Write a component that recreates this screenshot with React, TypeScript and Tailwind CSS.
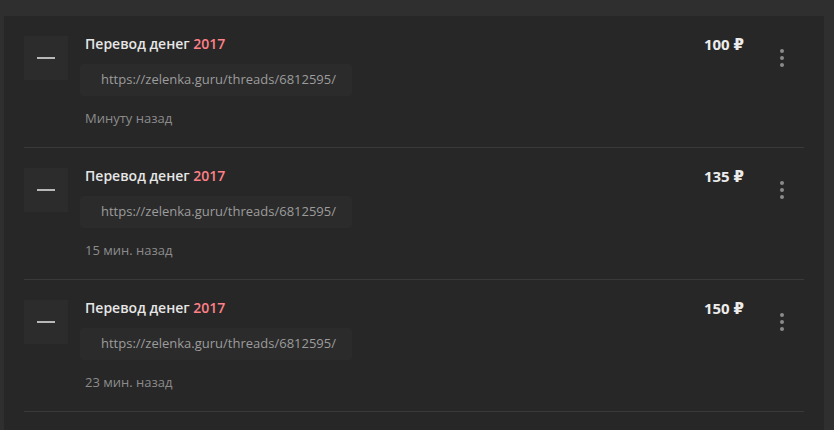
import React from 'react';

interface Transfer {
  title: string;
  year: string;
  url: string;
  time: string;
  amount: number;
}

const transfers: Transfer[] = [
  { title: 'Перевод денег', year: '2017', url: 'https://zelenka.guru/threads/6812595/', time: 'Минуту назад', amount: 100 },
  { title: 'Перевод денег', year: '2017', url: 'https://zelenka.guru/threads/6812595/', time: '15 мин. назад', amount: 135 },
  { title: 'Перевод денег', year: '2017', url: 'https://zelenka.guru/threads/6812595/', time: '23 мин. назад', amount: 150 },
];

const TransferRow: React.FC<{ item: Transfer }> = ({ item }) => (
  <div className="flex items-start pt-5 pb-[21px] border-b border-[#3a3a3a]">
    <div className="w-11 h-11 flex-shrink-0 bg-[#2c2c2c] flex items-center justify-center">
      <span className="block w-[18px] h-[2px] bg-[#b8b8b8]" />
    </div>
    <div className="flex-1 ml-[17px]">
      <div className="text-[14px] leading-4 font-semibold text-[#e6e6e6]">
        {item.title} <span className="text-[#ff8087]">{item.year}</span>
      </div>
      <div className="mt-3 -ml-[5px] inline-flex items-center h-8 pl-[21px] pr-4 bg-[#2b2b2b] rounded-sm text-[13px] text-[#9c9c9c]">
        {item.url}
      </div>
      <div className="mt-[14px] text-[13px] leading-4 text-[#8c8c8c]">{item.time}</div>
    </div>
    <div className="-mt-px text-[15px] leading-[18px] font-bold text-[#ececec] whitespace-nowrap">
      {item.amount} ₽
    </div>
    <button className="ml-[26px] mr-[10px] mt-[13px] w-6 flex flex-col items-center gap-[3px]">
      <span className="block w-1 h-1 rounded-full bg-[#8a8a8a]" />
      <span className="block w-1 h-1 rounded-full bg-[#8a8a8a]" />
      <span className="block w-1 h-1 rounded-full bg-[#8a8a8a]" />
    </button>
  </div>
);

export default function App() {
  return (
    <div className="min-h-[430px] bg-[#2f2f2f] pt-4 pl-1 pr-[10px]" style={{ fontFamily: '"Open Sans", "DejaVu Sans", sans-serif' }}>
      <div className="bg-[#272727] px-5 min-h-[414px]">
        {transfers.map((t, i) => (
          <TransferRow key={i} item={t} />
        ))}
      </div>
    </div>
  );
}
